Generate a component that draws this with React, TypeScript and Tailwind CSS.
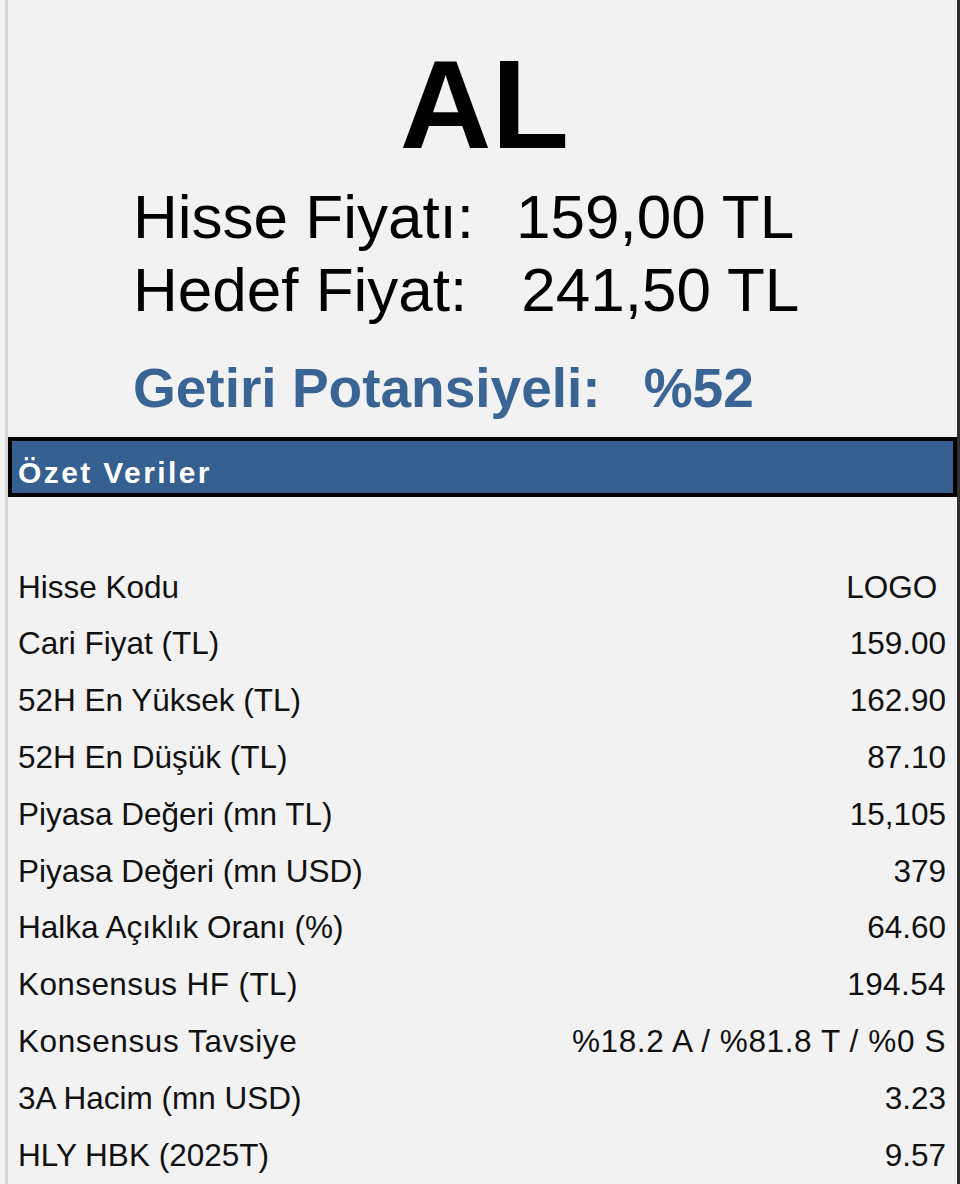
const rows: [string, string, string?][] = [
  ['Hisse Kodu', 'LOGO '],
  ['Cari Fiyat (TL)', '159.00'],
  ['52H En Yüksek (TL)', '162.90'],
  ['52H En Düşük (TL)', '87.10'],
  ['Piyasa Değeri (mn TL)', '15,105'],
  ['Piyasa Değeri (mn USD)', '379'],
  ['Halka Açıklık Oranı (%)', '64.60'],
  ['Konsensus HF (TL)', '194.54', 'tracking-[0.4px]'],
  ['Konsensus Tavsiye', '%18.2 A / %81.8 T / %0 S', 'tracking-[0.6px]'],
  ['3A Hacim (mn USD)', '3.23'],
  ['HLY HBK (2025T)', '9.57'],
];

export default function App() {
  return (
    <div className="h-[1184px] overflow-hidden bg-[#f2f2f2] font-['Liberation_Sans',Arial,sans-serif] text-black">
      <div className="ml-[5px] h-full border-l-[3px] border-r-[3px] border-l-[#d4d4d4] border-r-[#2e2e2e]">
        {/* tavsiye */}
        <div className="flex flex-col items-center pt-[41px]">
          <div className="ml-[4px] text-[127px] font-bold leading-none">AL</div>
        </div>

        <div className="ml-[125px] mt-[12px] text-[62px] leading-[73px]">
          <div className="flex">
            <span>Hisse Fiyatı:</span>
            <span className="ml-[42px]">159,00 TL</span>
          </div>
          <div className="flex">
            <span>Hedef Fiyat:</span>
            <span className="ml-[54px]">241,50 TL</span>
          </div>
        </div>

        <div className="ml-[125px] mt-[32px] flex text-[55px] font-bold leading-[60px] text-[#3a6494]">
          <span>Getiri Potansiyeli:</span>
          <span className="ml-[43px]">%52</span>
        </div>

        {/* özet veriler başlığı */}
        <div className="mt-[19px] h-[60px] border-[4px] border-black bg-[#36608f] pl-[6px] pt-[12px] text-[30px] font-bold leading-[40px] tracking-[2.4px] text-white">
          Özet Veriler
        </div>

        <div className="mt-[61.6px] pl-[10px] pr-[11px] text-[31.5px] text-[#111]">
          {rows.map(([k, v, extra]) => (
            <div key={k} className={'flex h-[56.8px] items-center justify-between leading-[56.8px] ' + (extra ?? '')}>
              <span>{k}</span>
              <span className="whitespace-pre">{v}</span>
            </div>
          ))}
        </div>
      </div>
    </div>
  );
}
